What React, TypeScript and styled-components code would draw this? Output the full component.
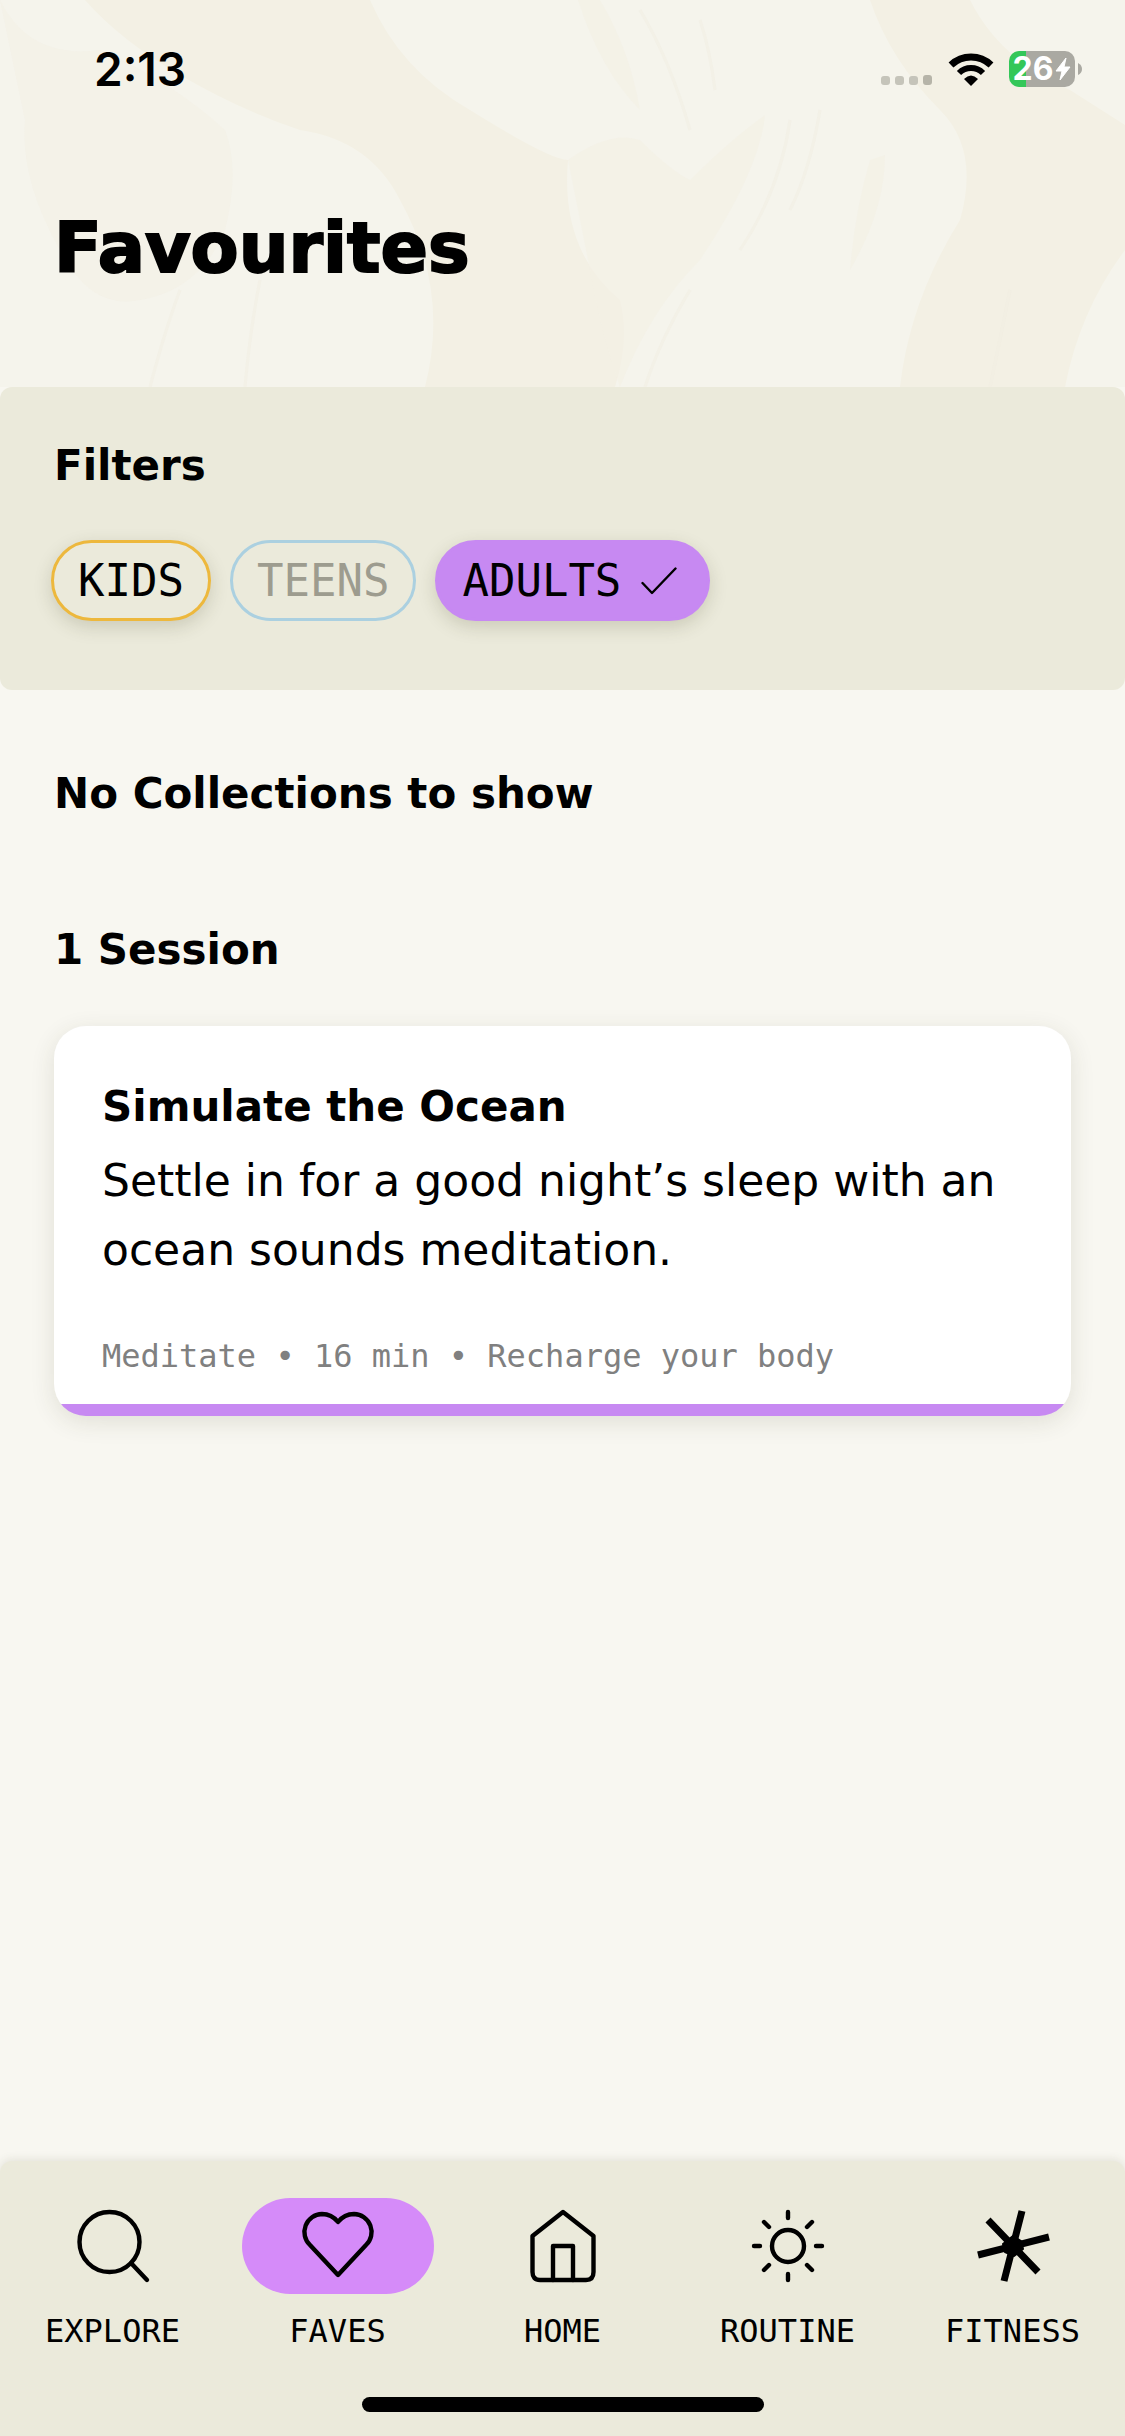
import React from "react";
import styled, { createGlobalStyle } from "styled-components";

const sans = `"DejaVu Sans", "Open Sans", sans-serif`;
const system = `Inter, Roboto, sans-serif`;
const mono = `"DejaVu Sans Mono", "Liberation Mono", monospace`;

const Global = createGlobalStyle`
  *, *::before, *::after { box-sizing: border-box; }
  html, body, #root { height: 100%; }
  body { margin: 0; background: #f8f7f1; color: #000; font-family: ${sans}; }
  h1, h2, h3, p { margin: 0; }
`;

const Screen = styled.div`
  min-height: 100%;
  display: flex;
  flex-direction: column;
`;

const Hero = styled.header`
  position: relative;
  overflow: hidden;
  background: #f5f4ec;
`;

const Texture = styled.svg`
  position: absolute;
  inset: 0;
  width: 100%;
  height: 100%;
`;

const HeroContent = styled.div`
  position: relative;
  display: flex;
  flex-direction: column;
  gap: 86px;
  padding: 42px 54px 73px;
`;

const StatusBar = styled.div`
  display: flex;
  align-items: center;
  justify-content: space-between;
  height: 54px;
  margin-left: 40px;
  margin-right: -12px;
  font-family: ${system};
`;

const Clock = styled.time`
  font-size: 46px;
  font-weight: 600;
  line-height: 54px;
`;

const StatusIcons = styled.div`
  display: flex;
  align-items: center;
  gap: 15px;
`;

const Battery = styled.div`
  display: flex;
  align-items: center;
  gap: 3px;
`;

const BatteryBody = styled.div`
  display: flex;
  align-items: center;
  justify-content: center;
  gap: 2px;
  width: 66px;
  height: 36px;
  border-radius: 10px;
  background: linear-gradient(90deg, #34c759 17px, #aaa9a2 17px);
  color: #fff;
  font-size: 32px;
  font-weight: 700;
  line-height: 36px;
`;

const PageTitle = styled.h1`
  font-size: 70px;
  font-weight: 700;
  line-height: 132px;
  -webkit-text-stroke: 2px #000;
`;

const Filters = styled.section`
  display: flex;
  flex-direction: column;
  gap: 44px;
  padding: 49px 51px 69px;
  border-radius: 12px;
  background: #ebeadb;
`;

const Heading = styled.h2`
  font-size: 42px;
  font-weight: 700;
  line-height: 60px;
`;

const FilterHeading = styled(Heading)`
  padding-left: 3px;
`;

const ChipRow = styled.div`
  display: flex;
  flex-wrap: wrap;
  gap: 19px;
`;

const Chip = styled.button<{ $edge: string; $fill?: string }>`
  display: flex;
  align-items: center;
  gap: 20px;
  height: 81px;
  padding: 0 24px;
  border: 3px solid ${(p) => p.$edge};
  border-radius: 41px;
  background: ${(p) => p.$fill ?? "#ebeadb"};
  box-shadow: 0 6px 18px rgba(60, 60, 30, 0.18);
  color: #000;
  font-family: ${mono};
  font-size: 44px;
  line-height: 54px;

  &:disabled {
    box-shadow: none;
    color: #9d9c8f;
  }
`;

const Check = styled.svg`
  margin-right: 6px;
`;

const Results = styled.main`
  flex: 1;
  display: flex;
  flex-direction: column;
  gap: 96px;
  padding: 74px 54px 60px;
`;

const Group = styled.section`
  display: flex;
  flex-direction: column;
  gap: 46px;
`;

const Card = styled.article`
  display: flex;
  flex-direction: column;
  overflow: hidden;
  padding: 48px 48px 36px;
  border-radius: 32px;
  background: linear-gradient(#c789f2, #c789f2) bottom / 100% 12px no-repeat #fff;
  box-shadow: 0 6px 24px rgba(60, 60, 30, 0.12);
`;

const CardTitle = styled.h3`
  font-size: 42px;
  font-weight: 700;
  line-height: 66px;
`;

const CardText = styled.p`
  margin-top: 6px;
  font-size: 44px;
  line-height: 69px;
`;

const CardMeta = styled.p`
  margin-top: 48px;
  color: #808080;
  font-family: ${mono};
  font-size: 32px;
  line-height: 48px;
`;

const TabBar = styled.nav`
  display: flex;
  flex-direction: column;
  align-items: center;
  gap: 47px;
  padding: 37px 0 24px;
  border-radius: 12px 12px 0 0;
  background: #ebeadb;
  box-shadow: 0 -2px 9px rgba(60, 60, 30, 0.1);
`;

const Tabs = styled.div`
  display: grid;
  grid-template-columns: repeat(5, 1fr);
  width: 100%;
`;

const Tab = styled.a`
  display: flex;
  flex-direction: column;
  align-items: center;
  gap: 18px;
  color: #000;
  font-family: ${mono};
  font-size: 32px;
  line-height: 38px;
  text-decoration: none;
`;

const TabIcon = styled.span<{ $active?: boolean }>`
  display: flex;
  align-items: center;
  justify-content: center;
  width: 192px;
  height: 96px;
  border-radius: 48px;
  background: ${(p) => (p.$active ? "#d58bf9" : "transparent")};
`;

const HomeIndicator = styled.div`
  width: 402px;
  height: 15px;
  border-radius: 8px;
  background: #000;
`;

const IconFrame = ({ children }: { children: React.ReactNode }) => (
  <svg
    width="72"
    height="72"
    viewBox="0 0 72 72"
    fill="none"
    stroke="currentColor"
    strokeWidth="4.4"
    strokeLinecap="round"
    strokeLinejoin="round"
    overflow="visible"
    aria-hidden="true"
  >
    {children}
  </svg>
);

const SearchIcon = () => (
  <IconFrame>
    <circle cx="32.5" cy="32" r="30" />
    <path d="M54 53 70 70" />
  </IconFrame>
);

const HeartIcon = () => (
  <IconFrame>
    <path d="M36 65 8 35A18 18 0 0 1 20 4C27 4 32 7 36 12C40 7 45 4 52 4A18 18 0 0 1 64 35Z" />
  </IconFrame>
);

const HomeIcon = () => (
  <IconFrame>
    <path d="M36 2 66.500 26V62Q66.500 70 59 70H13Q5.500 70 5.500 62V26Z" />
    <path d="M26 70V36H46V70" />
  </IconFrame>
);

const SunIcon = () => (
  <IconFrame>
    <circle cx="36" cy="36" r="16" />
    <path d="M36 2V8M36 64V70M2 36H8M64 36H70M12 12 17 17M55 55 60 60M12 60 17 55M55 17 60 12" />
  </IconFrame>
);

const AsteriskIcon = () => (
  <IconFrame>
    <path d="M45 1 27 71M1 45 72 27M11 10 61 62" strokeWidth="7" strokeLinecap="butt" />
    <path d="M36 26 44 31 46 39 37 46 28 42 26 34Z" fill="currentColor" strokeWidth="2" />
  </IconFrame>
);

const CheckIcon = () => (
  <Check width="36" height="28" viewBox="0 0 36 28" fill="none" stroke="#000" strokeWidth="2.400" aria-hidden="true">
    <path d="M1.500 16 11 26 34.500 1.500" strokeLinecap="round" strokeLinejoin="round" />
  </Check>
);

const SignalIcon = () => (
  <svg width="52" height="34" viewBox="0 0 52 34" fill="#c5c4ba" aria-hidden="true">
    <rect x="0" y="24" width="9" height="9" rx="3" />
    <rect x="14" y="24" width="9" height="9" rx="3" />
    <rect x="28" y="24" width="9" height="9" rx="3" />
    <rect x="42" y="23" width="9" height="10" rx="3" fill="#b6b4a8" />
  </svg>
);

const WifiIcon = () => (
  <svg width="46" height="34" viewBox="0 0 46 34" fill="none" stroke="#000" strokeWidth="7" aria-hidden="true">
    <path d="M3 13A29 29 0 0 1 43 13" />
    <path d="M11 21A17 17 0 0 1 35 21" strokeWidth="6" />
    <path d="M16 27Q23 20 30 27L23 34Z" fill="#000" stroke="none" />
  </svg>
);

const BoltIcon = () => (
  <svg width="16" height="24" viewBox="0 0 16 24" fill="#fff" stroke="#fff" strokeLinejoin="round" aria-hidden="true">
    <path d="M11 1 1 14H7L5 23 15 10H9Z" />
  </svg>
);

const BatteryCap = () => (
  <svg width="5" height="12" viewBox="0 0 5 12" fill="#aaa9a2" aria-hidden="true">
    <path d="M0 0Q4 2 4 6Q4 10 0 12Z" />
  </svg>
);

const tabs = [
  { label: "EXPLORE", Icon: SearchIcon },
  { label: "FAVES", Icon: HeartIcon, active: true },
  { label: "HOME", Icon: HomeIcon },
  { label: "ROUTINE", Icon: SunIcon },
  { label: "FITNESS", Icon: AsteriskIcon },
];

export default function App() {
  return (
    <>
      <Global />
      <Screen>
        <Hero>
          <Texture viewBox="0 0 1125 387" preserveAspectRatio="none" aria-hidden="true" fill="#f3f0e4">
            <path d="M85 0H370Q400 70 470 110Q550 160 568 160Q560 250 620 300Q630 340 615 387H425Q450 290 400 200Q370 140 300 130Q240 110 180 75Q120 40 85 0Z" />
            <path d="M0 0Q30 60 100 50Q170 80 225 130Q240 170 225 230Q200 290 140 300Q90 310 60 250Q20 180 25 120Z" opacity=".5" />
            <path d="M870 0H970Q1000 60 1070 90L1125 125V250Q1080 310 1065 387H900Q910 300 960 220Q980 150 940 110Q890 60 870 0Z" />
            <path d="M578 0Q600 70 640 110Q630 50 600 0ZM568 160Q610 130 640 140Q670 170 690 180Q730 140 765 115Q760 170 700 260Q650 310 620 387Q600 330 590 270ZM870 160 885 155Q885 210 850 270Q855 210 870 160Z" opacity=".6" />
            <g fill="none" stroke="#f1eee2" strokeWidth="3" opacity=".5">
              <path d="M640 10Q670 60 690 130M700 20Q710 50 715 90M790 120Q780 190 740 250M820 110Q810 170 790 210M690 290Q660 340 645 387M180 290Q165 330 150 387M260 280Q250 330 245 387M1010 290Q1000 340 990 387" />
            </g>
          </Texture>
          <HeroContent>
            <StatusBar>
              <Clock>2:13</Clock>
              <StatusIcons>
                <SignalIcon />
                <WifiIcon />
                <Battery>
                  <BatteryBody>
                    26
                    <BoltIcon />
                  </BatteryBody>
                  <BatteryCap />
                </Battery>
              </StatusIcons>
            </StatusBar>
            <PageTitle>Favourites</PageTitle>
          </HeroContent>
        </Hero>
        <Filters>
          <FilterHeading>Filters</FilterHeading>
          <ChipRow>
            <Chip $edge="#edb83d">KIDS</Chip>
            <Chip $edge="#abd0e0" disabled>
              TEENS
            </Chip>
            <Chip $edge="#c789f2" $fill="#c789f2" aria-pressed="true">
              ADULTS
              <CheckIcon />
            </Chip>
          </ChipRow>
        </Filters>
        <Results>
          <Heading>No Collections to show</Heading>
          <Group>
            <Heading>1 Session</Heading>
            <Card>
              <CardTitle>Simulate the Ocean</CardTitle>
              <CardText>Settle in for a good night’s sleep with an ocean sounds meditation.</CardText>
              <CardMeta>Meditate • 16 min • Recharge your body</CardMeta>
            </Card>
          </Group>
        </Results>
        <TabBar>
          <Tabs>
            {tabs.map(({ label, Icon, active }) => (
              <Tab key={label} href={`#${label.toLowerCase()}`} aria-current={active ? "page" : undefined}>
                <TabIcon $active={active}>
                  <Icon />
                </TabIcon>
                {label}
              </Tab>
            ))}
          </Tabs>
          <HomeIndicator />
        </TabBar>
      </Screen>
    </>
  );
}
